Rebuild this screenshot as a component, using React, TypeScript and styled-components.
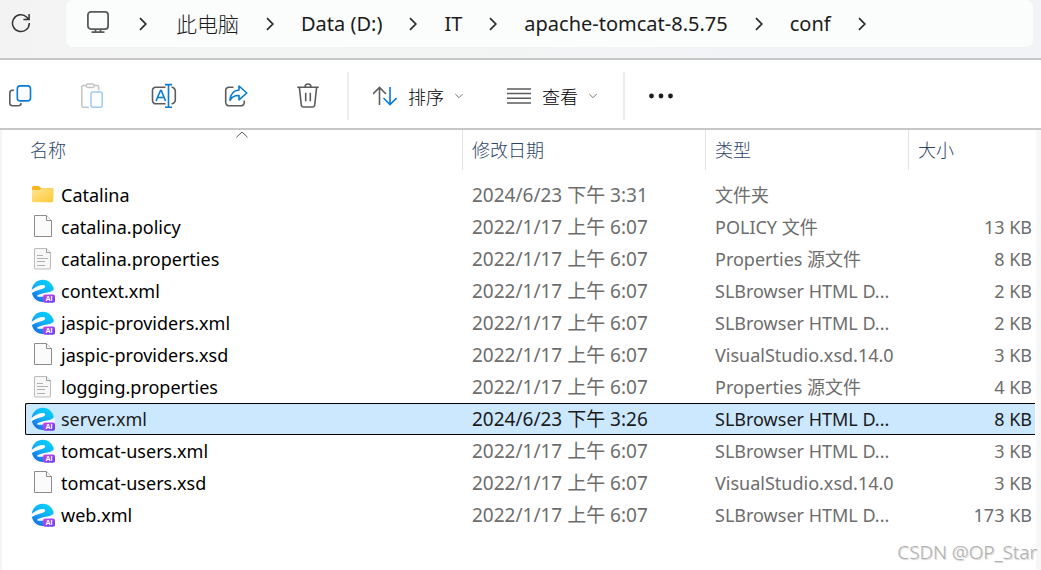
import React from "react";
import styled, { createGlobalStyle, css } from "styled-components";

const GlobalStyle = createGlobalStyle`
  * { box-sizing: border-box; }
  body {
    margin: 0;
    background: #fff;
    color: #1b1b1b;
    font-family: "Noto Sans", "Noto Sans CJK SC", sans-serif;
    font-size: 18px;
  }
  button {
    font: inherit;
    color: inherit;
    background: none;
    border: 0;
    padding: 0;
    cursor: pointer;
  }
  a { color: inherit; text-decoration: none; }
  svg { display: block; flex: none; }
`;

const Window = styled.div`
  position: relative;
  display: flex;
  flex-direction: column;
  min-height: 100vh;
  overflow: hidden;
`;

const AddressBar = styled.header`
  display: flex;
  align-items: flex-start;
  height: 60px;
  padding-right: 8px;
  background: linear-gradient(90deg, #f3f3f3, #f2f4f4 50%, #f2f3f6 70%);
  border-bottom: 2px solid #c6c8c8;
`;

const RefreshButton = styled.button`
  display: grid;
  place-items: center;
  width: 42px;
  height: 46px;
  margin-right: 24px;
`;

const Crumbs = styled.nav`
  display: flex;
  align-items: center;
  flex: 1;
  min-width: 0;
  height: 47px;
  padding-left: 20px;
  gap: 27px;
  background: #fbfdfc;
  border-radius: 7px;
  font-size: 20px;
  line-height: 28px;
  white-space: nowrap;
`;

const Crumb = styled.a<{ $large?: boolean }>`
  padding-left: ${(p) => (p.$large ? 2 : 0)}px;
  font-size: ${(p) => (p.$large ? 21 : 20)}px;
  font-weight: ${(p) => (p.$large ? 300 : 400)};
`;

const Toolbar = styled.div`
  display: flex;
  align-items: center;
  height: 70px;
  padding-top: 4px;
  border-bottom: 2px solid #c6c8c8;
`;

const IconButtons = styled.div`
  display: flex;
  gap: 32px;
  margin-right: 19px;
`;

const IconButton = styled.button`
  display: grid;
  place-items: center;
  width: 40px;
  height: 40px;
`;

const Divider = styled.span`
  width: 2px;
  height: 48px;
  background: #ececec;
`;

const MenuButtons = styled.div`
  display: flex;
  gap: 44px;
  padding: 0 26px 0 24px;
`;

const MenuButton = styled.button`
  display: flex;
  align-items: center;
  height: 40px;
  gap: 11px;
  font-size: 18px;
  font-weight: 300;
  color: #000;
`;

const MoreButton = styled(IconButton)`
  margin-left: 16px;
`;

const FilePane = styled.main`
  flex: 1;
  padding: 0 1px 0 23px;
  border-left: 2px solid #f5f5f5;
  border-right: 5px solid #f7f7f7;
`;

const FileTable = styled.table`
  width: 100%;
  table-layout: fixed;
  border-collapse: separate;
  border-spacing: 0;
`;

const Col = styled.col<{ $width?: number }>`
  ${(p) => p.$width && css`width: ${p.$width}px;`}
`;

const HeadCell = styled.th`
  position: relative;
  height: 40px;
  padding: 0 0 0 9px;
  text-align: left;
  font-weight: 300;
  font-size: 18px;
  line-height: 26px;
  color: #2c4468;
  & + & { border-left: 1px solid #e2e2e2; }
  &:first-child { padding-left: 5px; }
`;

const SortMark = styled.span`
  position: absolute;
  top: 1px;
  left: 0;
  right: 4px;
  display: flex;
  justify-content: center;
`;

const Spacer = styled.tbody`
  td { height: 9px; padding: 0; }
`;

const Cell = styled.td`
  height: 32px;
  padding: 0 12px 0 10px;
  line-height: 26px;
  white-space: nowrap;
  overflow: hidden;
  text-overflow: ellipsis;
  color: #6d6d6d;
`;

const NameCell = styled(Cell)`
  padding-left: 6px;
  color: #000;
`;

const DateCell = styled(Cell)`
  font-size: 19px;
`;

const SizeCell = styled(Cell)`
  padding-right: 3px;
  text-align: right;
`;

const Row = styled.tr<{ $selected?: boolean }>`
  ${(p) =>
    p.$selected &&
    css`
      td {
        background: #cce8ff;
        color: #1b1b1b;
        border-top: 1px solid #000;
        border-bottom: 1px solid #000;
      }
      td:first-child {
        padding-left: 5px;
        border-left: 1px solid #000;
        border-radius: 2px 0 0 2px;
      }
    `}
`;

const FileName = styled.span`
  display: flex;
  align-items: center;
  gap: 6px;
`;

const Watermark = styled.div`
  position: absolute;
  right: 4px;
  bottom: 5px;
  font-size: 19px;
  font-weight: 300;
  line-height: 26px;
  color: #b0b0b0;
  text-shadow: 1px 1px 1px #8a8a8a66;
`;

const Chevron = () => (
  <svg width="8" height="14" viewBox="0 0 8 14" fill="none" stroke="#2a2a2a" strokeWidth="1.7">
    <path d="M1 1.2 6.8 7 1 12.8" />
  </svg>
);

const DownChevron = () => (
  <svg width="8" height="6" viewBox="0 0 8 6" fill="none" stroke="#777" strokeWidth="1">
    <path d="M0.3 1 4 4.7 7.7 1" />
  </svg>
);

const RefreshIcon = () => (
  <svg width="20" height="20" viewBox="0 0 20 20" fill="none" stroke="#333" strokeWidth="1.5">
    <path d="M18.3 10A8.4 8.4 0 1 1 15.8 4.2L18 6.4M18.1 1V6.6H12.4" />
  </svg>
);

const MonitorIcon = () => (
  <svg width="26" height="28" viewBox="0 0 26 28" fill="none" stroke="#5a5a5a" strokeWidth="1.8">
    <rect x="1.9" y="1.9" width="20.2" height="17.2" rx="3" />
    <path d="M9.5 19v3M14.5 19v3M5.5 22.2h13" />
  </svg>
);

const CopyIcon = () => (
  <svg width="24" height="24" viewBox="0 0 24 24" fill="none" strokeWidth="1.6">
    <path stroke="#5c5c5c" d="M6 6.2H4.5A2.8 2.8 0 0 0 1.8 9v10a2.8 2.8 0 0 0 2.8 2.8h5.6a3 3 0 0 0 3-2.6" />
    <rect x="9.3" y="1.9" width="13.2" height="15" rx="3" fill="#fbfbfb" stroke="#0a7bd4" />
  </svg>
);

const PasteIcon = () => (
  <svg width="24" height="26" viewBox="0 0 24 26" fill="none" strokeWidth="1.5">
    <path stroke="#c4c4c4" d="M8.8 24.2H3.3a1.5 1.5 0 0 1-1.5-1.5V4a1.5 1.5 0 0 1 1.5-1.5H6M14 2.5h3.2A1.5 1.5 0 0 1 18.7 4v3.5" />
    <rect stroke="#c4c4c4" x="6.2" y="1" width="8" height="3.4" rx="1.7" />
    <rect stroke="#9dcbf0" fill="#fafcfe" x="11" y="9" width="11.2" height="15.2" rx="1.7" />
  </svg>
);

const RenameIcon = () => (
  <svg width="26" height="26" viewBox="0 0 26 26" fill="none" strokeWidth="1.6">
    <path stroke="#5c5c5c" d="M14.5 4.2H4.8A3.3 3.3 0 0 0 1.5 7.5v10a3.3 3.3 0 0 0 3.3 3.3h9.7M20.5 4.2A3.8 3.8 0 0 1 24.3 8v9a3.8 3.8 0 0 1-3.8 3.8" />
    <path stroke="#0a7bd4" d="M5 18 9.5 7.5h.8L14.5 18M6.5 14.5h6.5M14 1.6h7M14 24.2h7M17.5 1.6v22.6" />
  </svg>
);

const ShareIcon = () => (
  <svg width="26" height="24" viewBox="0 0 26 24" fill="none" strokeWidth="1.6" strokeLinejoin="round">
    <path stroke="#5c5c5c" d="M10.5 3.2H6A3.3 3.3 0 0 0 2.7 6.5v12A3.3 3.3 0 0 0 6 21.8h12a3.3 3.3 0 0 0 3.3-3.3v-2" />
    <path stroke="#0a7bd4" d="M16 2 23.8 9 16 15.8v-4.3c-4-.2-6.8 1-9 4.8.3-5.5 3.2-9.8 9-10.3Z" />
  </svg>
);

const TrashIcon = () => (
  <svg width="24" height="26" viewBox="0 0 24 26" fill="none" stroke="#5c5c5c" strokeWidth="1.6">
    <path d="M1.2 4.3h21.6M9 4.3V4a3 3 0 0 1 6 0v.3M3.4 4.3 5.3 22a2.3 2.3 0 0 0 2.3 2h8.8a2.3 2.3 0 0 0 2.3-2L20.6 4.3M9.7 9.8v8.5M14.3 9.8v8.5" />
  </svg>
);

const SortIcon = () => (
  <svg width="24" height="20" viewBox="1 0 24 20" fill="none" strokeWidth="1.6">
    <path stroke="#5c5c5c" d="M7.5 19V1.5M1 8 7.5 1.5 14 8" />
    <path stroke="#0a7bd4" d="M18 1v17.5M11.5 12 18 18.5 24.5 12" />
  </svg>
);

const ViewIcon = () => (
  <svg width="24" height="16" viewBox="0 0 24 16" stroke="#5c5c5c" strokeWidth="1.5">
    <path d="M0 1h24M0 5.6h24M0 10.3h24M0 15h24" />
  </svg>
);

const MoreIcon = () => (
  <svg width="24" height="6" viewBox="0 0 24 6" fill="#1b1b1b">
    <circle cx="2.5" cy="3" r="2.4" />
    <circle cx="12" cy="3" r="2.4" />
    <circle cx="21.5" cy="3" r="2.4" />
  </svg>
);

const SortArrow = () => (
  <svg width="12" height="7" viewBox="0 0 12 7" fill="none" stroke="#5c5c5c">
    <path d="M0.5 6.2 6 1 11.5 6.2" />
  </svg>
);

const FolderIcon = () => (
  <svg width="24" height="24" viewBox="0 0 24 24">
    <defs>
      <linearGradient id="folder" x1="0" y1="0" x2="1" y2="1">
        <stop offset="0" stopColor="#ffe594" />
        <stop offset="1" stopColor="#ffc937" />
      </linearGradient>
    </defs>
    <path fill="#f6b71c" d="M1 4.5a1.5 1.5 0 0 1 1.5-1.5h5.3L10 5h11a1.3 1.3 0 0 1 1.300 1.300V12H1Z" />
    <path fill="url(#folder)" d="M1 7h7.500l2-1.700H21a1.300 1.300 0 0 1 1.300 1.300v11.400a1.300 1.300 0 0 1-1.300 1.300H2.300A1.300 1.300 0 0 1 1 18Z" />
  </svg>
);

const BlankIcon = () => (
  <svg width="24" height="24" viewBox="0 0 24 24" fill="#fbfbfb" stroke="#8c8c8c">
    <path d="M3.500 .500h12l5 5v16h-17Z" />
    <path d="M15.500 .500v5h5" />
  </svg>
);

const TextIcon = () => (
  <svg width="24" height="24" viewBox="0 0 24 24" fill="#f7f7f7" stroke="#bcbcbc">
    <path d="M4 1.5h11.5l4 4v16a.5.5 0 0 1-.5.5H4a.5.5 0 0 1-.5-.5V2a.5.5 0 0 1 .5-.5Z" />
    <path stroke="#9a9a9a" d="M15.5 1.5v4h4" />
    <path stroke="#b0b0b0" d="M6 8.500h6M6 11.500h11M6 14.500h8M6 18.500h8" />
  </svg>
);

const BrowserIcon = () => (
  <svg width="24" height="24" viewBox="0 0 24 24">
    <defs>
      <linearGradient id="orb" x1="0.8" y1="0" x2="0.2" y2="1">
        <stop offset="0" stopColor="#06d4fa" />
        <stop offset="0.5" stopColor="#12aef5" />
        <stop offset="1" stopColor="#1668e8" />
      </linearGradient>
      <linearGradient id="badge" x1="0" y1="0" x2="1" y2="1">
        <stop offset="0" stopColor="#d04be8" />
        <stop offset="1" stopColor="#5a3cf0" />
      </linearGradient>
    </defs>
    <circle cx="11.8" cy="11.8" r="11.1" fill="url(#orb)" />
    <path fill="#fff" d="M0 11.500C3 8.500 7.500 6.300 11 6c3.200-.2 4 1.500 2.200 3C11 10.700 5.500 10.500.3 14.500Z" />
    <path fill="#fff" d="M6 17.200c1.500-2.500 6.500-2.800 10.500-3.700 3-.7 5.500-1.700 6.700-3.500L24 17h-9c-3 .8-6 1.200-9 .2Z" />
    <rect x="12" y="15.5" width="12" height="8.3" rx="2" fill="url(#badge)" />
    <text x="18" y="22.3" textAnchor="middle" fontSize="7" fontWeight="700" fontFamily="Liberation Sans, sans-serif" fill="#fff">AI</text>
  </svg>
);

const icons = { folder: FolderIcon, blank: BlankIcon, text: TextIcon, browser: BrowserIcon };

type FileEntry = {
  icon: keyof typeof icons;
  name: string;
  date: string;
  type: string;
  size: string;
  selected?: boolean;
};

const OLD = "2022/1/17 上午 6:07";
const HTML = "SLBrowser HTML D...";

const files: FileEntry[] = [
  { icon: "folder", name: "Catalina", date: "2024/6/23 下午 3:31", type: "文件夹", size: "" },
  { icon: "blank", name: "catalina.policy", date: OLD, type: "POLICY 文件", size: "13 KB" },
  { icon: "text", name: "catalina.properties", date: OLD, type: "Properties 源文件", size: "8 KB" },
  { icon: "browser", name: "context.xml", date: OLD, type: HTML, size: "2 KB" },
  { icon: "browser", name: "jaspic-providers.xml", date: OLD, type: HTML, size: "2 KB" },
  { icon: "blank", name: "jaspic-providers.xsd", date: OLD, type: "VisualStudio.xsd.14.0", size: "3 KB" },
  { icon: "text", name: "logging.properties", date: OLD, type: "Properties 源文件", size: "4 KB" },
  { icon: "browser", name: "server.xml", date: "2024/6/23 下午 3:26", type: HTML, size: "8 KB", selected: true },
  { icon: "browser", name: "tomcat-users.xml", date: OLD, type: HTML, size: "3 KB" },
  { icon: "blank", name: "tomcat-users.xsd", date: OLD, type: "VisualStudio.xsd.14.0", size: "3 KB" },
  { icon: "browser", name: "web.xml", date: OLD, type: HTML, size: "173 KB" },
];

const crumbs = ["此电脑", "Data (D:)", "IT", "apache-tomcat-8.5.75", "conf"];

const tools = [
  { label: "复制", Icon: CopyIcon },
  { label: "粘贴", Icon: PasteIcon },
  { label: "重命名", Icon: RenameIcon },
  { label: "共享", Icon: ShareIcon },
  { label: "删除", Icon: TrashIcon },
];

export default function App() {
  return (
    <Window>
      <GlobalStyle />
      <AddressBar>
        <RefreshButton aria-label="刷新"><RefreshIcon /></RefreshButton>
        <Crumbs>
          <MonitorIcon />
          <Chevron />
          {crumbs.map((c, i) => (
            <React.Fragment key={c}>
              <Crumb href="#" $large={i === 0}>{c}</Crumb>
              <Chevron />
            </React.Fragment>
          ))}
        </Crumbs>
      </AddressBar>
      <Toolbar>
        <IconButtons>
          {tools.map(({ label, Icon }) => (
            <IconButton key={label} aria-label={label}><Icon /></IconButton>
          ))}
        </IconButtons>
        <Divider />
        <MenuButtons>
          <MenuButton><SortIcon />排序<DownChevron /></MenuButton>
          <MenuButton><ViewIcon />查看<DownChevron /></MenuButton>
        </MenuButtons>
        <Divider />
        <MoreButton aria-label="更多"><MoreIcon /></MoreButton>
      </Toolbar>
      <FilePane>
        <FileTable>
          <colgroup>
            <Col />
            <Col $width={243} />
            <Col $width={203} />
            <Col $width={127} />
          </colgroup>
          <thead>
            <tr>
              <HeadCell><SortMark><SortArrow /></SortMark><button>名称</button></HeadCell>
              <HeadCell><button>修改日期</button></HeadCell>
              <HeadCell><button>类型</button></HeadCell>
              <HeadCell><button>大小</button></HeadCell>
            </tr>
          </thead>
          <Spacer><tr><td colSpan={4} /></tr></Spacer>
          <tbody>
            {files.map((f) => {
              const Icon = icons[f.icon];
              return (
                <Row key={f.name} $selected={f.selected}>
                  <NameCell><FileName><Icon />{f.name}</FileName></NameCell>
                  <DateCell>{f.date}</DateCell>
                  <Cell>{f.type}</Cell>
                  <SizeCell>{f.size}</SizeCell>
                </Row>
              );
            })}
          </tbody>
        </FileTable>
      </FilePane>
      <Watermark>CSDN @OP_Star</Watermark>
    </Window>
  );
}
